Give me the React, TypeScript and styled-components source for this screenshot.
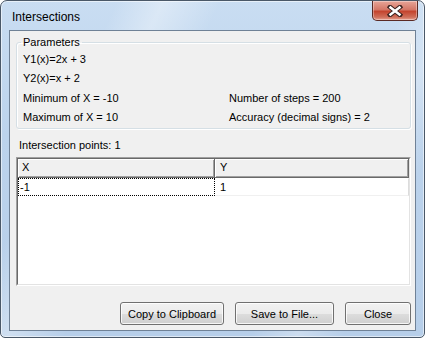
import React from 'react';
import styled, { createGlobalStyle } from 'styled-components';

const GlobalStyle = createGlobalStyle`
  html, body {
    margin: 0;
    padding: 0;
    background: #ffffff;
  }
  body {
    font-family: 'Liberation Sans', Arial, sans-serif;
    font-size: 11px;
    color: #000;
  }
`;

const Window = styled.div`
  box-sizing: border-box;
  width: 425px;
  height: 338px;
  display: flex;
  flex-direction: column;
  padding: 0 8px 6px 8px;
  border: 1px solid #4a5868;
  border-radius: 7px 7px 5px 5px;
  background:
    linear-gradient(115deg, rgba(255,255,255,0) 20%, rgba(255,255,255,0.35) 28%, rgba(255,255,255,0) 38%),
    linear-gradient(115deg, rgba(255,255,255,0) 70%, rgba(255,255,255,0.3) 78%, rgba(255,255,255,0) 86%),
    linear-gradient(to bottom, #c9ddf2 0%, #bcd3ec 40%, #b6cee9 100%);
  box-shadow: inset 0 0 0 1px rgba(255,255,255,0.55);
`;

const TitleBar = styled.div`
  height: 29px;
  display: flex;
  align-items: flex-start;
  justify-content: space-between;
`;

const Title = styled.span`
  font-size: 12px;
  line-height: 14px;
  margin: 9px 0 0 3px;
  color: #000;
`;

const CloseButton = styled.div`
  box-sizing: border-box;
  width: 46px;
  height: 20px;
  margin-right: -2px;
  display: flex;
  align-items: center;
  justify-content: center;
  border: 1px solid #5a2a24;
  border-top: none;
  border-radius: 0 0 5px 5px;
  background: linear-gradient(to bottom, #e7a598 0%, #d47767 45%, #c4452f 55%, #cf6f5a 85%, #e8a191 100%);
  box-shadow: inset 0 0 0 1px rgba(255,255,255,0.35);
`;

const Client = styled.div`
  flex: 1;
  display: flex;
  flex-direction: column;
  padding: 0 4px 5px 6px;
  border: 1px solid #6f8196;
  background: #f0f0f0;
`;

const GroupBox = styled.fieldset`
  margin: 5px 0 0 0;
  padding: 0 0 1px 6px;
  border: 1px solid #d5dfe5;
  border-radius: 3px;
  box-shadow: inset 1px 1px 0 #ffffff, 1px 1px 0 #ffffff;
  display: grid;
  grid-template-columns: 206px 1fr;
  grid-auto-rows: 19.5px;
  align-items: center;
`;

const Legend = styled.legend`
  margin-left: -2px;
  padding: 0 2px;
  line-height: 13px;
`;

const Field = styled.div<{ $wide?: boolean }>`
  grid-column: ${(p) => (p.$wide ? '1 / span 2' : 'auto')};
  white-space: nowrap;
`;

const Label = styled.div`
  margin: 10px 0 5px 3px;
  line-height: 13px;
`;

const ListOuter = styled.div`
  flex: 1;
  display: flex;
  border: 1px solid;
  border-color: #a0a0a0 #ffffff #ffffff #a0a0a0;
`;

const ListInner = styled.div`
  flex: 1;
  border: 1px solid;
  border-color: #696969 #e3e3e3 #e3e3e3 #696969;
  background: #ffffff;
`;

const Row = styled.div`
  display: grid;
  grid-template-columns: 197px 1fr;
`;

const HeaderCell = styled.div<{ $pad: number }>`
  box-sizing: border-box;
  height: 19px;
  line-height: 17px;
  padding-left: ${(p) => p.$pad}px;
  background: #f0f0f0;
  border-right: 1px solid #696969;
  border-bottom: 1px solid #696969;
  box-shadow: inset 1px 1px 0 #ffffff, inset -1px -1px 0 #a0a0a0;
`;

const Cell = styled.div<{ $focus?: boolean; $pad: number }>`
  box-sizing: border-box;
  height: 18px;
  line-height: 16px;
  padding-left: ${(p) => p.$pad}px;
  border: 1px dotted ${(p) => (p.$focus ? '#000' : 'transparent')};
  border-bottom-color: ${(p) => (p.$focus ? '#000' : '#f0f0f0')};
  border-right-color: ${(p) => (p.$focus ? '#000' : '#dcdcdc')};
  border-right-style: ${(p) => (p.$focus ? 'dotted' : 'solid')};
  border-bottom-style: ${(p) => (p.$focus ? 'dotted' : 'solid')};
`;

const ButtonRow = styled.div`
  display: flex;
  justify-content: flex-end;
  gap: 11px;
  margin-top: 16px;
`;

const Button = styled.button<{ $w: number }>`
  box-sizing: border-box;
  width: ${(p) => p.$w}px;
  height: 23px;
  padding: 0;
  font-family: 'Liberation Sans', Arial, sans-serif;
  font-size: 11px;
  color: #000;
  border: 1px solid #707070;
  border-radius: 3px;
  background: linear-gradient(to bottom, #f2f2f2 0%, #ebebeb 50%, #dddddd 51%, #cfcfcf 100%);
  box-shadow: inset 0 0 0 1px rgba(255,255,255,0.8);
`;

function CloseIcon() {
  return (
    <svg width="16" height="12" viewBox="0 0 16 12">
      <path d="M3 2 L13 10 M13 2 L3 10" stroke="#3b2320" strokeWidth="4.5" strokeLinecap="square" />
      <path d="M3.5 2.5 L12.5 9.5 M12.5 2.5 L3.5 9.5" stroke="#ffffff" strokeWidth="2.5" strokeLinecap="square" />
    </svg>
  );
}

export default function App() {
  return (
    <>
      <GlobalStyle />
      <Window>
        <TitleBar>
          <Title>Intersections</Title>
          <CloseButton>
            <CloseIcon />
          </CloseButton>
        </TitleBar>
        <Client>
          <GroupBox>
            <Legend>Parameters</Legend>
            <Field $wide>Y1(x)=2x + 3</Field>
            <Field $wide>Y2(x)=x + 2</Field>
            <Field>Minimum of X = -10</Field>
            <Field>Number of steps = 200</Field>
            <Field>Maximum of X = 10</Field>
            <Field>Accuracy (decimal signs) = 2</Field>
          </GroupBox>
          <Label>Intersection points: 1</Label>
          <ListOuter>
            <ListInner>
              <Row>
                <HeaderCell $pad={4}>X</HeaderCell>
                <HeaderCell $pad={5}>Y</HeaderCell>
              </Row>
              <Row>
                <Cell $focus $pad={1}>-1</Cell>
                <Cell $pad={4}>1</Cell>
              </Row>
            </ListInner>
          </ListOuter>
          <ButtonRow>
            <Button $w={104}>Copy to Clipboard</Button>
            <Button $w={99}>Save to File...</Button>
            <Button $w={66}>Close</Button>
          </ButtonRow>
        </Client>
      </Window>
    </>
  );
}
